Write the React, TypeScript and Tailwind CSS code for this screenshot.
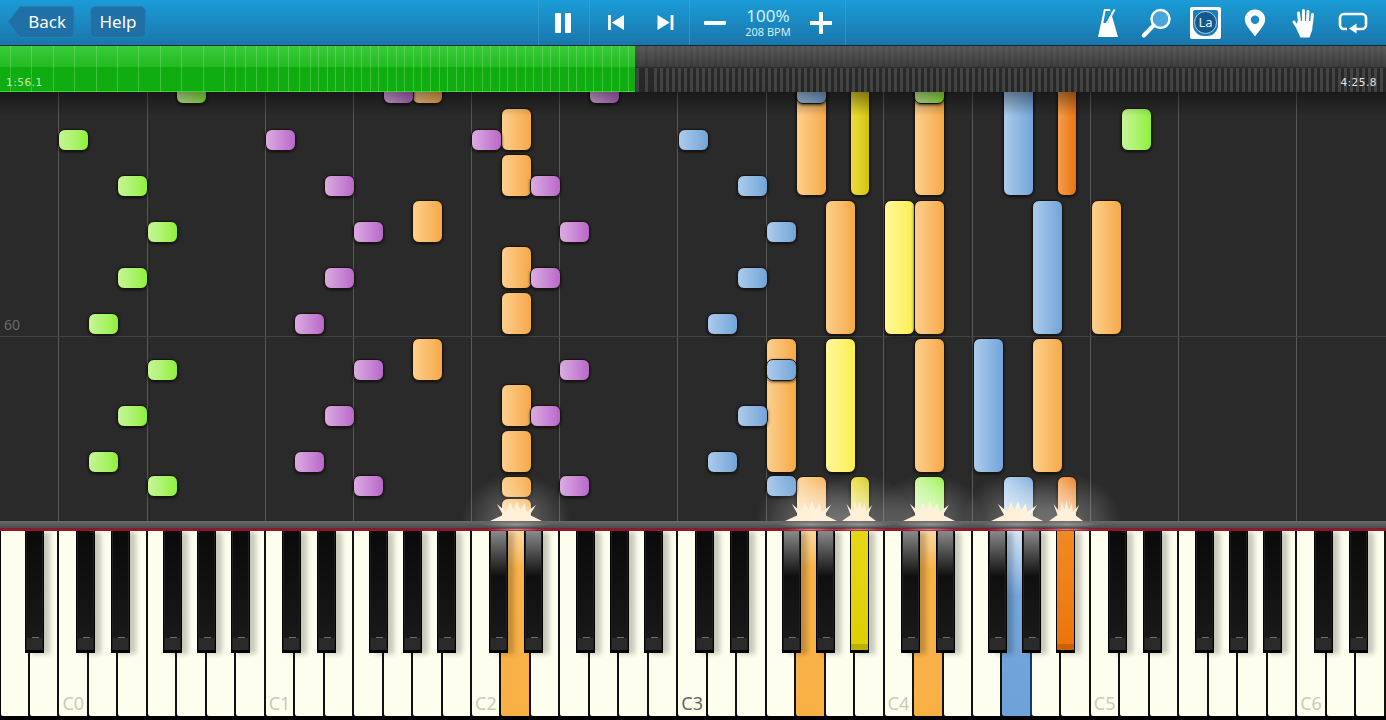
import React from 'react';

type Kind = 'green' | 'purple' | 'orange' | 'blue' | 'yellow' | 'mustard' | 'amber';
type Note = [Kind, number, number, number, number, boolean?];

const noteColors: Record<Kind, string> = {
  green: 'bg-linear-to-r from-[#c8f598] to-[#8df02e]',
  purple: 'bg-linear-to-r from-[#dcaee2] to-[#b765c8]',
  orange: 'bg-linear-to-r from-[#fdd08f] to-[#f5a842]',
  blue: 'bg-linear-to-r from-[#aecdec] to-[#70a3d8]',
  yellow: 'bg-linear-to-r from-[#fff89a] to-[#fdee48]',
  mustard: 'bg-linear-to-r from-[#ecdf3a] to-[#d2c300]',
  amber: 'bg-linear-to-r from-[#f7a04a] to-[#e87208]',
};

// screen coordinates, the roll starts at y=92. long notes first, short ones sit on top
const notes: Note[] = [
  ['orange', 412, 80, 30, 23],
  ['orange', 412, 201, 30, 41],
  ['orange', 412, 339, 30, 41],
  ['orange', 501, 109, 30, 41],
  ['orange', 501, 155, 30, 41],
  ['orange', 501, 247, 30, 41],
  ['orange', 501, 293, 30, 41],
  ['orange', 501, 385, 30, 41],
  ['orange', 501, 431, 30, 41],
  ['orange', 501, 477, 30, 20],
  ['orange', 501, 499, 30, 30, true],
  ['orange', 796, 80, 30, 115],
  ['blue', 796, 80, 30, 23],
  ['orange', 825, 201, 30, 133],
  ['orange', 914, 80, 30, 115],
  ['green', 914, 80, 30, 23],
  ['yellow', 884, 201, 30, 133],
  ['orange', 914, 201, 30, 133],
  ['orange', 766, 339, 30, 133],
  ['blue', 766, 360, 30, 20],
  ['orange', 914, 339, 30, 133],
  ['orange', 1032, 339, 30, 133],
  ['orange', 1091, 201, 30, 133],
  ['yellow', 825, 339, 30, 133],
  ['mustard', 850, 80, 19, 115],
  ['blue', 1003, 80, 30, 115],
  ['blue', 1032, 201, 30, 133],
  ['blue', 973, 339, 30, 133],
  ['amber', 1057, 80, 19, 115],
  ['green', 1121, 109, 30, 41],
  ['orange', 796, 477, 30, 60, true],
  ['mustard', 850, 477, 19, 60, true],
  ['green', 914, 477, 30, 60, true],
  ['blue', 1003, 477, 30, 60, true],
  ['amber', 1057, 477, 19, 60, true],
  ['green', 176, 80, 30, 23],
  ['green', 58, 130, 30, 20],
  ['green', 117, 176, 30, 20],
  ['green', 147, 222, 30, 20],
  ['green', 117, 268, 30, 20],
  ['green', 88, 314, 30, 20],
  ['green', 147, 360, 30, 20],
  ['green', 117, 406, 30, 20],
  ['green', 88, 452, 30, 20],
  ['green', 147, 476, 30, 20],
  ['purple', 383, 80, 30, 23],
  ['purple', 589, 80, 30, 23],
  ['purple', 265, 130, 30, 20],
  ['purple', 324, 176, 30, 20],
  ['purple', 353, 222, 30, 20],
  ['purple', 324, 268, 30, 20],
  ['purple', 294, 314, 30, 20],
  ['purple', 353, 360, 30, 20],
  ['purple', 324, 406, 30, 20],
  ['purple', 294, 452, 30, 20],
  ['purple', 353, 476, 30, 20],
  ['purple', 471, 130, 30, 20],
  ['purple', 530, 176, 30, 20],
  ['purple', 559, 222, 30, 20],
  ['purple', 530, 268, 30, 20],
  ['purple', 559, 360, 30, 20],
  ['purple', 530, 406, 30, 20],
  ['purple', 559, 476, 30, 20],
  ['blue', 678, 130, 30, 20],
  ['blue', 737, 176, 30, 20],
  ['blue', 766, 222, 30, 20],
  ['blue', 737, 268, 30, 20],
  ['blue', 707, 314, 30, 20],
  ['blue', 737, 406, 30, 20],
  ['blue', 707, 452, 30, 20],
  ['blue', 766, 476, 30, 20],
];

const gridLines = [58, 147, 265, 353, 471, 559, 677, 766, 883, 972, 1090, 1178, 1296];
const bursts: [number, number][] = [
  [516, 52],
  [811, 52],
  [859, 34],
  [929, 52],
  [1017, 52],
  [1066, 34],
];

const whiteKeys = Array.from({ length: 48 }, (_, i) => i);
const activeWhite: Record<number, string> = {
  17: 'bg-linear-to-b from-[#fdd9a0] via-[#f8b349] via-[20%] to-[#f8b045] border-r-[#6b4a12]',
  27: 'bg-linear-to-b from-[#fdd9a0] via-[#f8b349] via-[20%] to-[#f8b045] border-r-[#6b4a12]',
  31: 'bg-linear-to-b from-[#fdd9a0] via-[#f8b349] via-[20%] to-[#f8b045] border-r-[#6b4a12]',
  34: 'bg-linear-to-b from-[#d5e6f6] via-[#74a6dc] via-[35%] to-[#6fa2d8] border-r-[#123a66]',
};
const labels: Record<number, string> = { 2: 'C0', 9: 'C1', 16: 'C2', 23: 'C3', 30: 'C4', 37: 'C5', 44: 'C6' };

// black key lefts, one octave, then repeated every 206.3px
const blackOffsets = [76, 111, 163, 197, 231];
const blackKeys = [24.7];
for (let k = 0; k < 7; k++) {
  blackOffsets.forEach((o) => {
    const x = o + k * 206.3;
    if (x < 1386) blackKeys.push(x);
  });
}
const isNear = (x: number, a: number) => Math.abs(x - a) < 2;
const glowKeys = [488.6, 523.6, 781.9, 815.9, 901.2, 936.2, 988.2, 1022.2];
const yellowKey = 849.9;
const amberKey = 1056.2;

const makeTicks = () => {
  const out: number[] = [];
  let x = 10;
  while (x < 1386) {
    out.push(x);
    if (x < 220) x += 21.4;
    else if (x < 300) x += 10.7;
    else if (x < 640) x += 8.6;
    else x += 6 + ((Math.round(x) * 7) % 6);
  }
  return out;
};
const ticks = makeTicks();

const BackShape = () => (
  <svg className="absolute inset-0" width="68" height="32" viewBox="0 0 68 32">
    <path d="M13 .5H63a4 4 0 0 1 4 4v23a4 4 0 0 1-4 4H13L.8 16Z" fill="#1f70a6" stroke="#2a80b5" />
  </svg>
);

const Metronome = () => (
  <svg width="22" height="30" viewBox="0 0 22 30" fill="#fff">
    <path d="M7 1h6l8 28H1Z M8.5 3 6.4 15h5.2l3.4-9.5L13.5 3Z" fillRule="evenodd" />
    <path d="M8.5 18 17.5 1.5" stroke="#fff" strokeWidth="2" />
    <path d="M6 15.5h9l1 3H6Z" />
  </svg>
);

const Magnifier = () => (
  <svg width="31" height="30" viewBox="0 0 31 30">
    <circle cx="19.5" cy="11" r="9" fill="#4aa6d8" stroke="#fff" strokeWidth="2.4" />
    <path d="M12.5 17.5 2.8 27.5" stroke="#fff" strokeWidth="4" strokeLinecap="round" />
  </svg>
);

const Pin = () => (
  <svg width="22" height="28" viewBox="0 0 22 28">
    <path
      fillRule="evenodd"
      fill="#fff"
      d="M11 0.5C5 .5 .8 5 .8 10.5c0 5.5 6 11 10.2 17 4.2-6 10.2-11.5 10.2-17C21.2 5 17 .5 11 .5Zm0 6a4.2 4.2 0 1 1 0 8.4 4.2 4.2 0 0 1 0-8.4Z"
    />
  </svg>
);

const HandIcon = () => (
  <svg width="24" height="30" viewBox="0 0 24 30" fill="#fff">
    <g stroke="#fff" strokeWidth="3" strokeLinecap="round">
      <path d="M7.5 14 6.5 5" />
      <path d="M11.5 13V2.5" />
      <path d="M15.5 13 16 3.5" />
      <path d="M19.5 15 20.5 6.5" />
      <path d="M6 20 2 14" />
    </g>
    <path d="M5.5 13h15.5l-.8 9-2.7 7.5H8.5L4.5 21Z" />
  </svg>
);

const LoopIcon = () => (
  <svg width="30" height="22" viewBox="0 0 30 22" fill="none">
    <path
      d="M9 17H6a4 4 0 0 1-4-4V6a4 4 0 0 1 4-4h18a4 4 0 0 1 4 4v7a4 4 0 0 1-4 4h-7"
      stroke="#fff"
      strokeWidth="2.6"
    />
    <path d="M18.5 11.5v10L11 16.5Z" fill="#fff" />
  </svg>
);

const Burst = ({ x, w }: { x: number; w: number }) => (
  <div className="absolute bottom-0 w-[110px] h-[60px]" style={{ left: x - 55 }}>
    <div className="absolute inset-0 bg-[radial-gradient(ellipse_50%_80%_at_50%_100%,rgba(255,255,255,0.32),rgba(255,255,255,0))]" />
    <svg
      className="absolute bottom-0"
      style={{ left: 55 - w / 2 }}
      width={w}
      height="20"
      viewBox="0 0 60 20"
      preserveAspectRatio="none"
      fill="#fff0d8"
    >
      <path d="M0 20 15 14 8 3 19 11 23 1 27 9 31 0 35 9 40 2 42 11 53 4 46 14 60 20Z" />
    </svg>
  </div>
);

const App = () => {
  return (
    <div className="w-[1386px] h-[720px] flex flex-col overflow-hidden bg-black text-white font-['Noto_Sans',sans-serif]">
      {/* Top toolbar */}
      <div className="h-[46px] shrink-0 flex items-stretch border-b border-[#0c2a3c] bg-linear-to-b from-[#1a9cd8] to-[#1a76ab]">
        <div className="w-[538px] shrink-0 flex items-center pl-[7px] gap-[15px] pb-[1px]">
          <div className="relative w-[68px] h-[32px] flex items-center justify-end pr-[9px] text-[17px]">
            <BackShape />
            <span className="relative">Back</span>
          </div>
          <div className="w-[56px] h-[32px] flex items-center justify-center rounded-[5px] border border-[#2a80b5] bg-[#1f70a6] text-[17px]">
            Help
          </div>
        </div>

        <div className="w-[51px] shrink-0 flex items-center justify-center gap-[4px] pr-[2px] border-l border-[#4aa8d4]/50">
          <div className="w-[6px] h-[20px] bg-white rounded-[1px]" />
          <div className="w-[6px] h-[20px] bg-white rounded-[1px]" />
        </div>
        <div className="w-[100px] shrink-0 flex items-center justify-between pl-[18px] pr-[15px] border-l border-[#4aa8d4]/50">
          <svg width="17" height="15" viewBox="0 0 18 16" fill="#fff">
            <path d="M0 0h3v16H0Z M17 0v16L4 8Z" />
          </svg>
          <svg width="18" height="15" viewBox="0 0 18 16" fill="#fff">
            <path d="M15 0h3v16h-3Z M1 0v16l13-8Z" />
          </svg>
        </div>
        <div className="w-[157px] shrink-0 flex items-center justify-between pl-[14px] pr-[13px] border-x border-[#4aa8d4]/50">
          <div className="w-[22px] h-[4px] bg-white rounded-[1px]" />
          <div className="flex flex-col items-center gap-[2px] text-[#d3eefa]">
            <span className="text-[17px] leading-[17px]">100%</span>
            <span className="text-[11px] leading-[12px]">208 BPM</span>
          </div>
          <svg width="22" height="22" viewBox="0 0 22 22" fill="#fff">
            <path d="M9 0h4v9h9v4h-9v9H9v-9H0V9h9Z" />
          </svg>
        </div>

        <div className="flex-1 flex items-center justify-end pr-[9px]">
          <div className="w-[49px] flex justify-center">
            <Metronome />
          </div>
          <div className="w-[49px] flex justify-center">
            <Magnifier />
          </div>
          <div className="w-[49px] flex justify-center">
            <div className="w-[31px] h-[32px] bg-white rounded-[2px] p-[3px]">
              <div className="w-full h-full rounded-t-[2px] rounded-b-[11px] bg-[#1c80b2] flex items-center justify-center">
                <div className="w-[23px] h-[23px] rounded-full bg-[#15598a] border border-[#a9d2e8] flex items-center justify-center text-[13px] leading-none text-[#e4f3fb]">
                  La
                </div>
              </div>
            </div>
          </div>
          <div className="w-[49px] flex justify-center">
            <Pin />
          </div>
          <div className="w-[49px] flex justify-center">
            <HandIcon />
          </div>
          <div className="w-[49px] flex justify-center">
            <LoopIcon />
          </div>
        </div>
      </div>

      {/* Song progress strip */}
      <div className="h-[46px] shrink-0 relative overflow-hidden bg-[linear-gradient(#5a5a5a,#3e3e3e_46%,#2a2a2a_47%,#262626)]">
        <div className="absolute left-0 top-0 bottom-0 w-[635px] bg-[linear-gradient(#3aca3a,#24bc24_46%,#10ad10_47%,#10ad10)] border-b border-[#3dd03d]" />
        {ticks.map((x) => (
          <div
            key={x}
            className={
              x < 635
                ? 'absolute top-0 bottom-0 w-px bg-[#9ce88c]/35'
                : 'absolute top-0 bottom-0 w-[3px] bg-[linear-gradient(rgba(0,0,0,0.08)_47%,rgba(210,210,210,0.16)_48%)]'
            }
            style={{ left: x }}
          />
        ))}
        <span className="absolute left-[6px] bottom-[3px] text-[10.5px] leading-[13px] tracking-[0.5px] text-[#c4ecb4] font-['DejaVu_Sans',sans-serif]">
          1:56.1
        </span>
        <span className="absolute right-[9px] bottom-[3px] text-[10.5px] leading-[13px] tracking-[0.5px] text-[#e4e4e4] font-['DejaVu_Sans',sans-serif]">
          4:25.8
        </span>
      </div>

      {/* Falling notes */}
      <div className="flex-1 relative overflow-hidden bg-[#2a2a2b]">
        {gridLines.map((x) => (
          <div key={x} className="absolute top-0 bottom-0 w-px bg-[#575757]" style={{ left: x }} />
        ))}
        <div className="absolute left-0 right-0 top-[244px] h-px bg-[#434343]" />
        <span className="absolute left-[4px] top-[224px] text-[14px] leading-[18px] text-[#6a6a6a]">60</span>

        {notes.map(([kind, x, y, w, h, hit], i) => (
          <div
            key={i}
            className={`absolute rounded-[7px] border border-[#1a150c] bg-origin-border overflow-hidden shadow-[0_1px_3px_rgba(0,0,0,0.7)] ${noteColors[kind]}`}
            style={{ left: x, top: y - 93, width: w + 1, height: h + 2 }}
          >
            {hit && <div className="absolute inset-0 bg-linear-to-b from-white/10 to-white/80" />}
          </div>
        ))}

        <div className="absolute left-0 right-0 top-0 h-[24px] bg-linear-to-b from-black/40 to-transparent" />
        {bursts.map(([x, w]) => (
          <Burst key={x} x={x} w={w} />
        ))}
      </div>

      {/* Keyboard */}
      <div className="h-[199px] shrink-0 flex flex-col">
        <div className="relative h-[7px] shrink-0 bg-linear-to-b from-[#6a6a6a] to-[#4c4c4c] overflow-hidden">
          {bursts.map(([x]) => (
            <div key={x} className="absolute top-0 bottom-0 w-[70px] bg-[radial-gradient(closest-side,rgba(255,255,255,0.35),rgba(255,255,255,0))]" style={{ left: x - 35 }} />
          ))}
        </div>
        <div className="relative h-[3px] shrink-0 bg-[#8a1a2c] overflow-hidden">
          {bursts.map(([x]) => (
            <div key={x} className="absolute top-0 bottom-0 w-[60px] bg-[radial-gradient(closest-side,rgba(255,255,255,0.5),rgba(255,255,255,0))]" style={{ left: x - 30 }} />
          ))}
        </div>
        <div className="relative flex-1 bg-black overflow-hidden">
          <div className="flex h-[185px] ml-[0.5px]">
            {whiteKeys.map((i) => (
              <div
                key={i}
                className={`relative w-[29.47px] shrink-0 rounded-b-[2px] border-r-2 border-r-[#111] ${activeWhite[i] ?? 'bg-[#fefeee]'}`}
              >
                {labels[i] && (
                  <span
                    className={`absolute left-[3px] bottom-[1px] text-[18px] leading-[24px] ${
                      i === 23 ? 'text-[#66665c]' : 'text-[#cbcbbb]'
                    }`}
                  >
                    {labels[i]}
                  </span>
                )}
              </div>
            ))}
          </div>

          {blackKeys.map((x) => {
            const glow = glowKeys.some((g) => isNear(x, g));
            const yellow = isNear(x, yellowKey);
            const amber = isNear(x, amberKey);
            const active = yellow || amber;
            return (
              <div
                key={x}
                className="absolute top-0 w-[19px] h-[122px] bg-black px-px shadow-[6px_1px_5px_rgba(0,0,0,0.22)]"
                style={{ left: x }}
              >
                <div
                  className={
                    yellow
                      ? 'relative h-[119px] bg-linear-to-b from-[#e6d818] to-[#dccf02]'
                      : amber
                        ? 'relative h-[119px] bg-linear-to-b from-[#f08a24] to-[#ec7408]'
                        : 'relative h-[119px] bg-linear-to-b from-[#0a0a0a] to-[#1a1a1a] border-x border-[#1f1f1f]'
                  }
                >
                  {glow && <div className="absolute inset-x-0 top-0 h-[45px] bg-linear-to-b from-[#8a8a8a] to-transparent" />}
                  <div
                    className={
                      active
                        ? 'absolute inset-x-0 bottom-0 h-[6px] bg-black/15'
                        : 'absolute inset-x-0 bottom-0 h-[12px] bg-[#2a2a2a]'
                    }
                  />
                  {!active && <div className="absolute left-[5px] top-[106px] w-[7px] h-px bg-[#6c6c6c]" />}
                </div>
              </div>
            );
          })}
        </div>
      </div>
    </div>
  );
};

export default App;
